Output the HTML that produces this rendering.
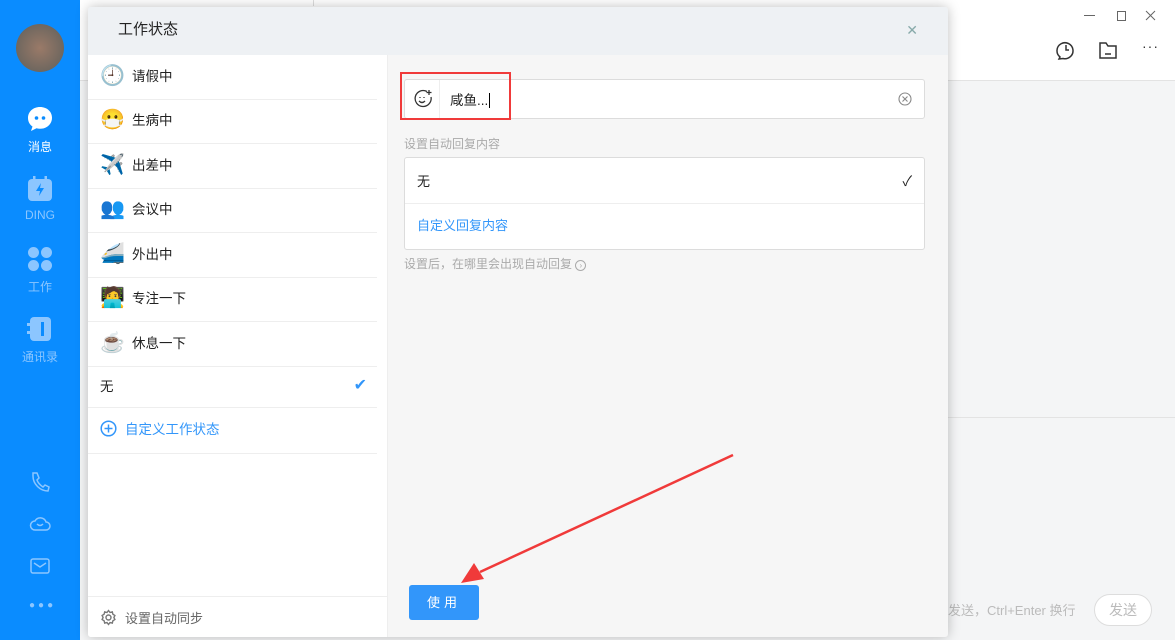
<!DOCTYPE html>
<html><head><meta charset="utf-8"><style>
*{margin:0;padding:0;box-sizing:border-box}
body{width:1175px;height:640px;overflow:hidden;position:relative;background:#f5f6f7;font-family:"Liberation Sans","Noto Sans CJK SC",sans-serif;font-size:13px;color:#222}
.side{position:absolute;left:0;top:0;width:80px;height:640px;background:#0a8cff}
.avatar{position:absolute;left:16px;top:24px;width:48px;height:48px;border-radius:50%;background:radial-gradient(circle at 50% 50%,#9a7a68,#6f675f 70%,#c9c9c9 100%)}
.nav{position:absolute;left:0;width:80px;text-align:center;color:#8cc6ff;font-size:12px}
.ic{display:block;margin:0 auto 6px;}
.topbar{position:absolute;left:80px;top:0;right:0;height:81px;background:#fff;border-bottom:1px solid #e3e3e3}
.right{position:absolute;left:948px;top:81px;right:0;bottom:0;background:#f4f5f6}
.dlg{position:absolute;left:88px;top:7px;width:860px;height:630px;background:#f6f6f6;box-shadow:0 0 12px rgba(0,0,0,.25);border-radius:3px;overflow:hidden}
.hd{height:48px;background:#eef1f4;padding-left:30px;line-height:46px;font-size:15px;color:#222;position:relative}
.list{position:absolute;left:0;top:48px;width:300px;bottom:0;background:#fff;border-right:1px solid #eee}
.row{height:44.5px;border-bottom:1px solid #eee;display:flex;align-items:center;padding-left:12px;padding-bottom:4px;font-size:13.5px;margin-right:10px}
.em{width:24px;font-size:20px;margin-right:8px;font-family:"Noto Color Emoji","DejaVu Sans",sans-serif;text-align:center}
.ft{position:absolute;left:0;right:0;bottom:0;height:41px;border-top:1px solid #eee;display:flex;align-items:center;padding-left:12px;color:#666}
.inp{position:absolute;left:316px;top:72px;width:521px;height:40px;background:#fff;border:1px solid #dcdcdc;border-radius:3px}
.box{position:absolute;left:316px;top:150px;width:521px;height:93px;background:#fff;border:1px solid #dcdcdc;border-radius:3px}
.btn{position:absolute;left:321px;top:578px;width:70px;height:35px;background:#3296fa;border-radius:3px;color:#fff;text-align:center;line-height:35px;letter-spacing:4px}
</style></head><body>
<div class="side">
 <div class="avatar"></div>
 <div class="nav" style="top:106px;color:#fff"><svg class="ic" width="26" height="26" viewBox="0 0 26 26"><path d="M13 1C6 1 1 5.8 1 12c0 3.5 1.6 6.5 4.5 8.5L4 25l5.5-2.7c1.1.3 2.3.5 3.5.5 7 0 12-4.8 12-11S20 1 13 1z" fill="#fff"/><circle cx="9.5" cy="12" r="1.8" fill="#0a8cff"/><circle cx="16.5" cy="12" r="1.8" fill="#0a8cff"/></svg>消息</div>
 <div class="nav" style="top:176px"><svg class="ic" width="26" height="26" viewBox="0 0 26 26"><rect x="1" y="3" width="24" height="22" rx="4" fill="#8cc6ff"/><rect x="6" y="0" width="2.5" height="5" fill="#8cc6ff"/><rect x="17.5" y="0" width="2.5" height="5" fill="#8cc6ff"/><path d="M14 7l-5 8h4l-1 5 5-8h-4z" fill="#0a8cff"/></svg>DING</div>
 <div class="nav" style="top:246px"><svg class="ic" width="26" height="26" viewBox="0 0 26 26" fill="#8cc6ff"><rect x="1" y="1" width="11" height="11" rx="5.5"/><rect x="14" y="1" width="11" height="11" rx="5.5"/><rect x="1" y="14" width="11" height="11" rx="5.5"/><rect x="14" y="14" width="11" height="11" rx="5.5"/></svg>工作</div>
 <div class="nav" style="top:316px"><svg class="ic" width="26" height="26" viewBox="0 0 26 26"><rect x="3" y="1" width="21" height="24" rx="4" fill="#8cc6ff"/><rect x="0" y="7" width="4" height="3" fill="#8cc6ff"/><rect x="0" y="15" width="4" height="3" fill="#8cc6ff"/><rect x="14" y="6" width="3" height="14" fill="#0a8cff"/></svg>通讯录</div>
 <svg style="position:absolute;left:30px;top:471px" width="20" height="22" viewBox="0 0 20 22" fill="none" stroke="#8cc6ff" stroke-width="1.5"><path d="M3 2l4 0 2 5-2 2c1 3 3 5 6 7l2-2 4 2-1 4c-8 0-15-7-15-15z"/></svg>
 <svg style="position:absolute;left:29px;top:513px" width="22" height="20" viewBox="0 0 22 20" fill="none" stroke="#8cc6ff" stroke-width="1.5"><path d="M6 17h11a4 4 0 0 0 0-8 6 6 0 0 0-11-1 4.5 4.5 0 0 0 0 9z"/><path d="M8 11q3 3 6 0"/></svg>
 <svg style="position:absolute;left:30px;top:557px" width="20" height="18" viewBox="0 0 20 18" fill="none" stroke="#8cc6ff" stroke-width="1.5"><rect x="1" y="2" width="18" height="14" rx="2"/><path d="M4 6l6 4 6-4"/></svg>
 <div style="position:absolute;left:29px;top:600px;color:#8cc6ff;font-size:10px;letter-spacing:3px">●●●</div>
</div>
<div class="topbar">
 <div style="position:absolute;left:233px;top:0;width:1px;height:6px;background:#ddd"></div>
 <div style="position:absolute;left:1004px;top:15px;width:11px;height:1px;background:#666"></div>
 <div style="position:absolute;left:1037px;top:11px;width:9px;height:10px;border:1px solid #666"></div>
 <svg style="position:absolute;left:1065px;top:10px" width="11" height="11" viewBox="0 0 11 11" stroke="#666" stroke-width="1"><path d="M1 1l9 9M10 1l-9 9"/></svg>
 <svg style="position:absolute;left:976px;top:40px" width="20" height="20" viewBox="0 0 20 20" fill="none" stroke="#333" stroke-width="1.5"><path d="M4 17a8 8 0 1 1 3 1.5L3 19z"/><path d="M10 5v5h3"/></svg>
 <svg style="position:absolute;left:1018px;top:40px" width="20" height="20" viewBox="0 0 20 20" fill="none" stroke="#333" stroke-width="1.5"><path d="M2 3h6l2 3h8v12H2z"/><path d="M7 14h6"/></svg>
 <div style="position:absolute;left:1062px;top:38px;color:#333;font-size:14px;letter-spacing:1px">···</div>
</div>
<div class="right">
 <div style="position:absolute;left:0;right:0;top:336px;height:1px;background:#e3e3e3"></div>
 <div style="position:absolute;left:0;top:519px;color:#bbb;font-size:13px">发送，Ctrl+Enter 换行</div>
 <div style="position:absolute;left:146px;top:513px;width:58px;height:32px;border:1px solid #ddd;border-radius:16px;color:#bbb;text-align:center;line-height:30px;font-size:14px;background:#fff">发送</div>
</div>
<div class="dlg">
 <div class="hd">工作状态<span style="position:absolute;right:30px;top:0;color:#8aa;font-size:14px">✕</span></div>
 <div class="list">
  <div class="row"><span class="em">🕘</span>请假中</div>
  <div class="row"><span class="em">😷</span>生病中</div>
  <div class="row"><span class="em">✈️</span>出差中</div>
  <div class="row"><span class="em">👥</span>会议中</div>
  <div class="row"><span class="em">🚄</span>外出中</div>
  <div class="row"><span class="em">🧑‍💻</span>专注一下</div>
  <div class="row"><span class="em">☕</span>休息一下</div>
  <div class="row" style="height:41px;justify-content:space-between;padding-right:10px">无<span style="color:#3296fa;font-size:16px">✔</span></div>
  <div class="row" style="height:46px;color:#3296fa"><svg width="17" height="17" viewBox="0 0 17 17" style="margin-right:8px" fill="none" stroke="#3296fa" stroke-width="1.5"><circle cx="8.5" cy="8.5" r="7.3"/><path d="M8.5 4.5v8M4.5 8.5h8"/></svg>自定义工作状态</div>
  <div class="ft"><svg width="17" height="17" viewBox="0 0 17 17" style="margin-right:8px" fill="none" stroke="#777" stroke-width="1.4"><circle cx="8.5" cy="8.5" r="2.5"/><path d="M8.5 1.5l1.5 2 2.3-.6.6 2.3 2 1.3-1 2 1 2-2 1.3-.6 2.3-2.3-.6-1.5 2-1.5-2-2.3.6-.6-2.3-2-1.3 1-2-1-2 2-1.3.6-2.3 2.3.6z"/></svg>设置自动同步</div>
 </div>
 <div class="inp">
  <div style="position:absolute;left:0;top:0;width:35px;height:38px;border-right:1px solid #eee"></div>
  <svg style="position:absolute;left:8px;top:9px" width="20" height="20" viewBox="0 0 20 20" fill="none" stroke="#333" stroke-width="1.3"><path d="M14 2.5A8 8 0 1 0 18 8"/><path d="M7 8v1M11 8v1"/><path d="M6 12q3 3 6 0"/><path d="M16 1v5M13.5 3.5h5"/></svg>
  <div style="position:absolute;left:45px;top:9px;font-size:13.5px">咸鱼...<span style="border-left:1px solid #000;margin-left:1px"></span></div>
  <svg style="position:absolute;right:12px;top:12px" width="14" height="14" viewBox="0 0 14 14" fill="none" stroke="#888" stroke-width="1.1"><circle cx="7" cy="7" r="6"/><path d="M4.5 4.5l5 5M9.5 4.5l-5 5"/></svg>
 </div>
 <div style="position:absolute;left:312px;top:65px;width:111px;height:48px;border:2px solid #f03a3a"></div>
 <div style="position:absolute;left:316px;top:128px;color:#aaa;font-size:12px">设置自动回复内容</div>
 <div class="box">
  <div style="height:46px;border-bottom:1px solid #eee;padding:0 12px;display:flex;align-items:center;justify-content:space-between">无<span style="font-size:14px">✓</span></div>
  <div style="padding:11px 12px;color:#3296fa">自定义回复内容</div>
 </div>
 <div style="position:absolute;left:316px;top:248px;color:#aaa;font-size:12px">设置后，在哪里会出现自动回复 <span style="display:inline-block;width:11px;height:11px;border:1px solid #aaa;border-radius:50%;font-size:8px;line-height:9px;text-align:center">›</span></div>
 <div class="btn">使用</div>
</div>
<svg style="position:absolute;left:0;top:0" width="1175" height="640"><line x1="733" y1="455" x2="480" y2="572" stroke="#f03a3a" stroke-width="2.5"/><path d="M461 583l13-20 10 16z" fill="#f03a3a"/></svg>
</body></html>
